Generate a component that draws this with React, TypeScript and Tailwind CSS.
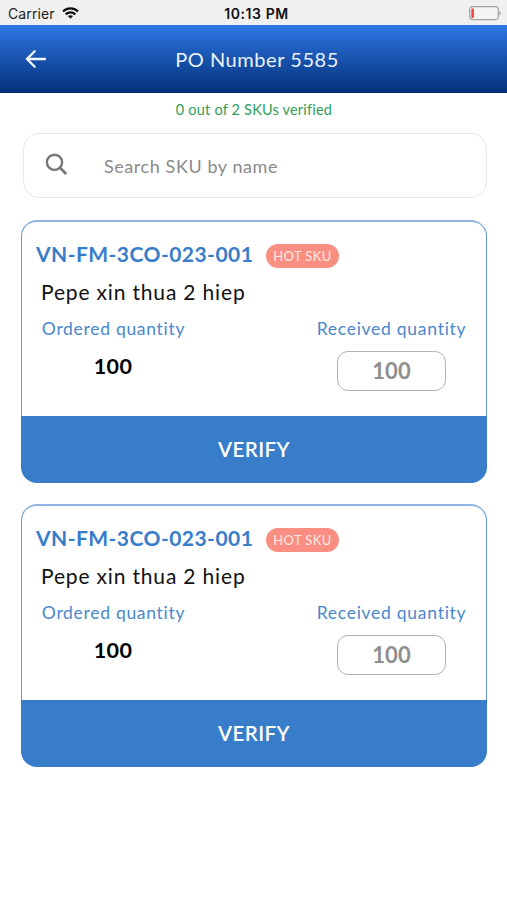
import React from 'react';

interface Sku {
  code: string;
  name: string;
  ordered: number;
  received: number;
}

const skus: Sku[] = [
  { code: 'VN-FM-3CO-023-001', name: 'Pepe xin thua 2 hiep', ordered: 100, received: 100 },
  { code: 'VN-FM-3CO-023-001', name: 'Pepe xin thua 2 hiep', ordered: 100, received: 100 }
];

const StatusBar: React.FC = () => (
  <div className="h-[25px] bg-[#f0f0f0] grid grid-cols-3 items-center pl-[8px] pr-[6px] pt-[3px] font-['Inter',sans-serif] text-[14px] leading-[20px] text-[#222]">
    <div className="flex items-center gap-[7px]">
      <span className="tracking-[0.1px]">Carrier</span>
      <svg width="17" height="12" viewBox="0 0 17 12" className="mb-[2px]" fill="none" stroke="#111" strokeWidth="2.3">
        <path d="M1 4.5C5.2 0.4 11.8 0.4 16 4.5" />
        <path d="M3.7 7.3C6.4 4.7 10.6 4.7 13.3 7.3" />
        <path d="M8.5 11.8L5.9 9.1C7.3 7.8 9.7 7.8 11.1 9.1Z" fill="#111" stroke="none" />
      </svg>
    </div>
    <span className="pl-[4px] text-center font-semibold tracking-[0.6px] text-[#111] whitespace-nowrap">10:13 PM</span>
    <svg width="32" height="15" viewBox="0 0 32 15" className="justify-self-end mb-[2px]">
      <rect x="0.7" y="0.7" width="28.6" height="13" rx="3.2" fill="#f4f4f4" stroke="#a3a3a3" strokeWidth="1.2" />
      <rect x="2.3" y="2.5" width="2.6" height="9.4" rx="1" fill="#f8433c" />
      <path d="M30.4 5.2C32.2 6 32.2 8.4 30.4 9.2Z" fill="#999" />
    </svg>
  </div>
);

const Header: React.FC = () => (
  <header className="h-[68px] bg-gradient-to-b from-[#2d77e6] to-[#05327a] border-b border-[#082a63] grid grid-cols-[80px_1fr_80px] items-center text-[#eaf1fc]">
    <button className="pl-[25px]" aria-label="Back">
      <svg width="22" height="20" viewBox="0 0 22 20" fill="none" stroke="#f3f7ff" strokeWidth="2.3" strokeLinecap="round">
        <path d="M20 10H2M9.7 2.2L2 10L9.7 17.8" />
      </svg>
    </button>
    <h1 className="pl-[7px] text-center text-[20px] leading-[24px] tracking-[0.55px]">PO Number 5585</h1>
  </header>
);

const SkuCard: React.FC<{ sku: Sku }> = ({ sku }) => (
  <section className="h-[263px] flex flex-col">
    <div className="h-[196px] rounded-t-[16px] border-x border-t-2 border-x-[#649ad5] border-t-[#8fb5e0] pl-[14px] pr-[20px] pt-[18px]">
      <div className="flex items-center h-[28px]">
        <h2 className="w-[230px] text-[21px] leading-[28px] font-bold text-[#377dca] tracking-[0.45px] whitespace-nowrap">{sku.code}</h2>
        <span className="w-[73px] h-[24px] mt-[3px] rounded-full bg-[#f98f83] text-[#ffe9e4] text-[13px] leading-[24px] text-center tracking-[0.4px] whitespace-nowrap">
          HOT SKU
        </span>
      </div>
      <p className="pl-[5px] mt-[10px] text-[21px] leading-[28px] tracking-[0.83px] text-[#111]">{sku.name}</p>
      <div className="flex justify-between pl-[6px] mt-[11px]">
        <div className="w-[143px] flex flex-col items-center">
          <span className="text-[17.5px] leading-[24px] tracking-[0.7px] text-[#4a88cc] whitespace-nowrap">Ordered quantity</span>
          <span className="mt-[11px] pr-px text-[21.5px] leading-[28px] font-bold tracking-[0.3px] text-black">{sku.ordered}</span>
        </div>
        <div className="w-[149px] flex flex-col items-center">
          <span className="text-[17.5px] leading-[24px] tracking-[0.73px] text-[#4a88cc] whitespace-nowrap">Received quantity</span>
          <input
            className="w-[109px] h-[40px] mt-[10px] pb-[2px] rounded-[11px] border-[1.5px] border-[#b1b5b8] text-center text-[22px] font-bold text-[#8e8e8e]"
            defaultValue={sku.received}
          />
        </div>
      </div>
    </div>
    <button className="h-[67px] rounded-b-[16px] bg-[#377dca] text-white text-[20.5px] font-semibold tracking-[0.4px]">VERIFY</button>
  </section>
);

const App: React.FC = () => {
  return (
    <div className="w-full h-[900px] overflow-hidden bg-white font-['Lato',sans-serif]">
      <StatusBar />
      <Header />
      <p className="h-[40px] pl-px pt-[7px] text-center text-[14.5px] leading-[20px] tracking-[0.2px] text-[#2e9e5b]">
        0 out of 2 SKUs verified
      </p>
      <main className="pl-[21px] pr-[20px]">
        <div className="h-[65px] ml-[2px] flex items-center rounded-[16px] border-[1.5px] border-[#e8e8e8] pl-[21px]">
          <svg width="24" height="24" viewBox="0 0 24 24" className="mb-[2px]" fill="none" stroke="#777" strokeWidth="2.4">
            <circle cx="9.5" cy="9.3" r="7.6" />
            <path d="M15 14.8L21.2 21" strokeWidth="2.8" />
          </svg>
          <input
            className="ml-[35px] w-[300px] text-[18px] leading-[24px] tracking-[0.57px] placeholder:text-[#8a8a8a]"
            placeholder="Search SKU by name"
          />
        </div>
        <div className="mt-[22px] flex flex-col gap-[21px]">
          {skus.map((sku, index) => (
            <SkuCard key={index} sku={sku} />
          ))}
        </div>
      </main>
    </div>
  );
};

export default App;
